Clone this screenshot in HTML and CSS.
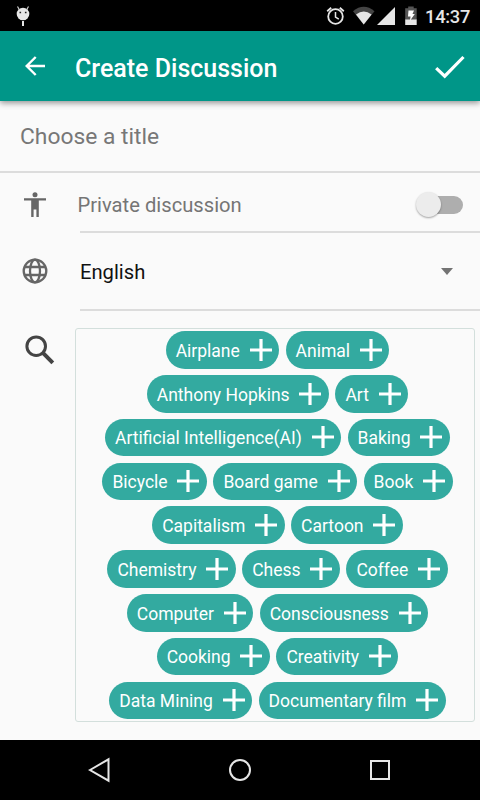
FILE: index.html
```html
<!DOCTYPE html>
<html lang="en">
<head>
<meta charset="utf-8">
<title>Create Discussion</title>
<link rel="stylesheet" href="styles.css">
</head>
<body>
<svg width="0" height="0" class="defs"><symbol id="plus" viewBox="0 0 22 22"><path d="M11 0v22M0 11h22" fill="none" stroke="#fff" stroke-width="3.2"/></symbol></svg>
<div class="status">
  <svg class="bug" width="14" height="20" viewBox="0 0 14 20"><circle cx="7" cy="8" r="6.3" fill="#e6e6e6"/><path d="M1.5.5l2 3.5M12.5.5l-2 3.5" stroke="#ccc" stroke-width="1.2"/><path d="M7 15v5" stroke="#e6e6e6" stroke-width="2"/><path d="M3.500 6.500h1.600M8.900 6.500h1.600" stroke="#222" stroke-width="1.500"/></svg>
  <svg class="tray" width="156" height="30" viewBox="324 0 156 30">
    <g fill="none" stroke="#e6e6e6" stroke-width="1.8"><circle cx="335.5" cy="16.500" r="7.300"/><path d="M335.5 12v5l3.300 2.200" stroke-width="1.500"/><path d="M327.200 11.200l4-3.500M343.800 11.200l-4-3.500"/></g>
    <path d="M353 11.200Q363.700 2.500 374.500 11.200L363.700 24.500z" fill="#444"/>
    <path d="M356 14.500Q363.700 8.600 371.600 14.500L363.700 24.500z" fill="#e6e6e6"/>
    <path d="M395 7v18h-18z" fill="#e6e6e6"/>
    <path d="M405.200 8.200h3V6.500h5.500v1.700h3V20h-11.500z" fill="#555"/><path d="M405.200 19.500h11.500V25h-11.500z" fill="#e6e6e6"/>
    <path d="M408.500 10.500h5.500l-1.500 3.500h2.300l-5 7 .8-4.500h-2.600z" fill="#fff"/>
  </svg>
  <span class="clock">14:37</span>
</div>
<header class="bar">
  <svg class="back" width="20" height="20" viewBox="0 0 20 20"><path d="M20 10H1.800M10.700 1L1.700 10l9 9" fill="none" stroke="#fff" stroke-width="2.400"/></svg>
  <h1>Create Discussion</h1>
  <svg class="check" width="30" height="24" viewBox="0 0 30 24"><path d="M1.200 13.200l8.500 8L28.500 2" fill="none" stroke="#fff" stroke-width="3.200"/></svg>
</header>
<main>
  <div class="title">Choose a title</div>
  <div class="row private">
    <div class="icon"><svg width="24" height="26" viewBox="0 0 24 26"><circle cx="12" cy="2.700" r="2.500" fill="#666"/><path d="M1 6.200h22v2.400h-7.200V25h-2.400v-7.500h-2.800V25H8.200V8.600H1z" fill="#666"/></svg></div>
    <div class="field"><span>Private discussion</span><div class="switch"><i></i></div></div>
  </div>
  <div class="row language">
    <div class="icon"><svg width="26" height="26" viewBox="0 0 26 26" fill="none" stroke="#666" stroke-width="2.300"><circle cx="13" cy="13" r="11.300"/><ellipse cx="13" cy="13" rx="5" ry="11.300"/><path d="M2.700 9h20.600M2.700 17h20.600"/></svg></div>
    <div class="field"><span>English</span><svg class="caret" width="12" height="7" viewBox="0 0 12 7"><path d="M0 0h12L6 7z" fill="#737373"/></svg></div>
  </div>
  <div class="topics">
    <div class="search"><svg width="30" height="30" viewBox="0 0 30 30" fill="none" stroke="#444"><circle cx="11.200" cy="11.200" r="9.300" stroke-width="3"/><path d="M18.200 18.200l9.600 9.600" stroke-width="4"/></svg></div>
    <div class="box">
      <div class="line"><span class="chip">Airplane<svg><use href="#plus"/></svg></span><span class="chip">Animal<svg><use href="#plus"/></svg></span></div>
      <div class="line"><span class="chip">Anthony Hopkins<svg><use href="#plus"/></svg></span><span class="chip">Art<svg><use href="#plus"/></svg></span></div>
      <div class="line"><span class="chip">Artificial Intelligence(AI)<svg><use href="#plus"/></svg></span><span class="chip">Baking<svg><use href="#plus"/></svg></span></div>
      <div class="line"><span class="chip">Bicycle<svg><use href="#plus"/></svg></span><span class="chip">Board game<svg><use href="#plus"/></svg></span><span class="chip">Book<svg><use href="#plus"/></svg></span></div>
      <div class="line"><span class="chip">Capitalism<svg><use href="#plus"/></svg></span><span class="chip">Cartoon<svg><use href="#plus"/></svg></span></div>
      <div class="line"><span class="chip">Chemistry<svg><use href="#plus"/></svg></span><span class="chip">Chess<svg><use href="#plus"/></svg></span><span class="chip">Coffee<svg><use href="#plus"/></svg></span></div>
      <div class="line"><span class="chip">Computer<svg><use href="#plus"/></svg></span><span class="chip">Consciousness<svg><use href="#plus"/></svg></span></div>
      <div class="line"><span class="chip">Cooking<svg><use href="#plus"/></svg></span><span class="chip">Creativity<svg><use href="#plus"/></svg></span></div>
      <div class="line"><span class="chip">Data Mining<svg><use href="#plus"/></svg></span><span class="chip">Documentary film<svg><use href="#plus"/></svg></span></div>
    </div>
  </div>
</main>
<nav>
  <svg width="24" height="26" viewBox="0 0 24 26"><path d="M2 13L20.500 2.300v21.400z"/></svg>
  <svg width="24" height="26" viewBox="0 0 24 26"><circle cx="12" cy="13" r="10"/></svg>
  <svg width="24" height="26" viewBox="0 0 24 26"><path d="M3 4h18v18H3z"/></svg>
</nav>
</body>
</html>
```
FILE: styles.css
```css
* { box-sizing: border-box; }
body {
  margin: 0;
  width: 480px;
  height: 800px;
  overflow: hidden;
  display: flex;
  flex-direction: column;
  background: #fafafa;
  font-family: Roboto, sans-serif;
}
svg { display: block; flex: none; }
.defs { position: absolute; }
.status {
  height: 31px;
  flex: none;
  display: flex;
  background: #000;
  position: relative;
}
.bug { margin: 6px 0 0 16px; }
.tray { margin-left: auto; }
.clock {
  position: absolute;
  right: 10px;
  top: 5px;
  font-size: 18.300px;
  line-height: 23px;
  font-weight: 500;
  letter-spacing: -.3px;
  color: #e6e6e6;
}
.bar {
  height: 70px;
  flex: none;
  display: flex;
  align-items: center;
  padding: 0 15px 0 25px;
  background: #009688;
  box-shadow: 0 2px 6px rgba(0, 0, 0, .42);
  color: #fff;
  z-index: 1;
}
.check { margin-left: auto; margin-top: 1px; }
h1 {
  margin: 5px 0 0 30px;
  font-size: 25px;
  line-height: 30px;
  font-weight: 500;
  white-space: nowrap;
}
main { flex: 1; min-height: 0; }
.title {
  height: 72px;
  padding-left: 20px;
  border-bottom: 2px solid #dcdcdc;
  line-height: 72px;
  font-size: 22.800px;
  color: #777;
}
.row { display: flex; }
.icon { width: 80px; padding-left: 22px; }
.field {
  flex: 1;
  display: flex;
  align-items: center;
  justify-content: space-between;
  border-bottom: 2px solid #dcdcdc;
  font-size: 20.200px;
}
.private { height: 60px; }
.private .icon { padding: 19px 0 0 23px; }
.private .field { color: #757575; padding: 6px 17px 0 0; }
.private .field span { margin-left: -2.500px; }
.switch {
  width: 45px;
  height: 18px;
  border-radius: 9px;
  background: #aeaeae;
}
.switch i {
  display: block;
  width: 25px;
  height: 25px;
  margin: -4px 0 0 -2px;
  border-radius: 50%;
  background: #ececec;
  box-shadow: 0 1px 2px rgba(0, 0, 0, .35);
}
.language { height: 78px; }
.language .icon { padding-top: 25px; }
.language .field { color: #111; padding: 0 27px 0 0; }
.language .field span { padding-top: 2px; }
.topics { display: flex; padding: 17px 5px 0 25px; }
.search { width: 50px; padding-top: 7px; }
.box {
  width: 400px;
  height: 394px;
  border: 1px solid #d3dfdc;
  border-radius: 3px;
  padding: 2.300px 0 0 5px;
  display: flex;
  flex-direction: column;
  gap: 6.300px;
}
.line { display: flex; justify-content: center; gap: 6.500px; }
.chip {
  display: flex;
  align-items: center;
  height: 37.500px;
  padding: 1.500px 7.500px 0 10px;
  gap: 9.800px;
  border-radius: 19px;
  background: #33aaa0;
  color: #fff;
  font-size: 17.500px;
  white-space: nowrap;
}
.chip svg { width: 22px; height: 22px; margin-top: -2px; }
nav {
  height: 60px;
  flex: none;
  display: flex;
  align-items: center;
  justify-content: center;
  gap: 116px;
  background: #000;
}
nav svg { fill: none; stroke: #e6e6e6; stroke-width: 2; }
```
